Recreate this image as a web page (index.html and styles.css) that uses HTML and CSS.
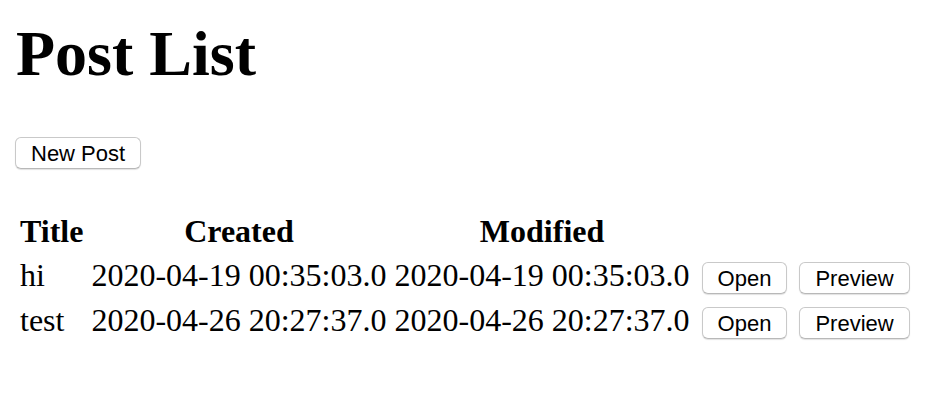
FILE: index.html
```html
<!DOCTYPE html>
<html>
<head>
<meta charset="utf-8">
<title>Post List</title>
<link rel="stylesheet" href="styles.css">
</head>
<body>
<h1 class="title">Post List</h1>
<div class="actions"><button class="btn">New Post</button></div>
<table class="posts">
<thead>
<tr><th>Title</th><th>Created</th><th>Modified</th><th></th></tr>
</thead>
<tbody>
<tr><td>hi</td><td>2020-04-19 00:35:03.0</td><td>2020-04-19 00:35:03.0</td><td class="ops"><button class="btn">Open</button><button class="btn">Preview</button></td></tr>
<tr><td>test</td><td>2020-04-26 20:27:37.0</td><td>2020-04-26 20:27:37.0</td><td class="ops"><button class="btn">Open</button><button class="btn">Preview</button></td></tr>
</tbody>
</table>
</body>
</html>
```
FILE: styles.css
```css
html, body {
  margin: 0;
  background: #fff;
  color: #000;
}
body {
  padding: 0 16px;
  font-family: "Liberation Serif", "Times New Roman", serif;
  font-size: 32px;
}
.title {
  font-size: 64px;
  font-weight: bold;
  line-height: 74px;
  margin: 17px 0 0;
}
.actions {
  display: flex;
  margin-top: 46px;
  margin-left: -1px;
}
.btn {
  font-family: "Liberation Sans", Arial, sans-serif;
  font-size: 22px;
  line-height: 25px;
  color: #000;
  background: #fff;
  border: 1px solid #c9c9c9;
  border-bottom-color: #b8b8b8;
  border-radius: 6px;
  box-shadow: 0 1px 1px rgba(0, 0, 0, 0.12);
  padding: 3px 15px 2px;
  margin: 0;
}
.posts {
  margin-top: 39px;
  margin-left: -2px;
  border-collapse: separate;
  border-spacing: 4px;
}
.posts th, .posts td {
  padding: 2px;
  line-height: 37px;
}
.posts th {
  font-weight: bold;
  text-align: center;
  line-height: 35px;
}
.posts td.ops {
  padding-left: 6px;
  white-space: nowrap;
}
.posts td.ops .btn + .btn {
  margin-left: 12px;
}
```
